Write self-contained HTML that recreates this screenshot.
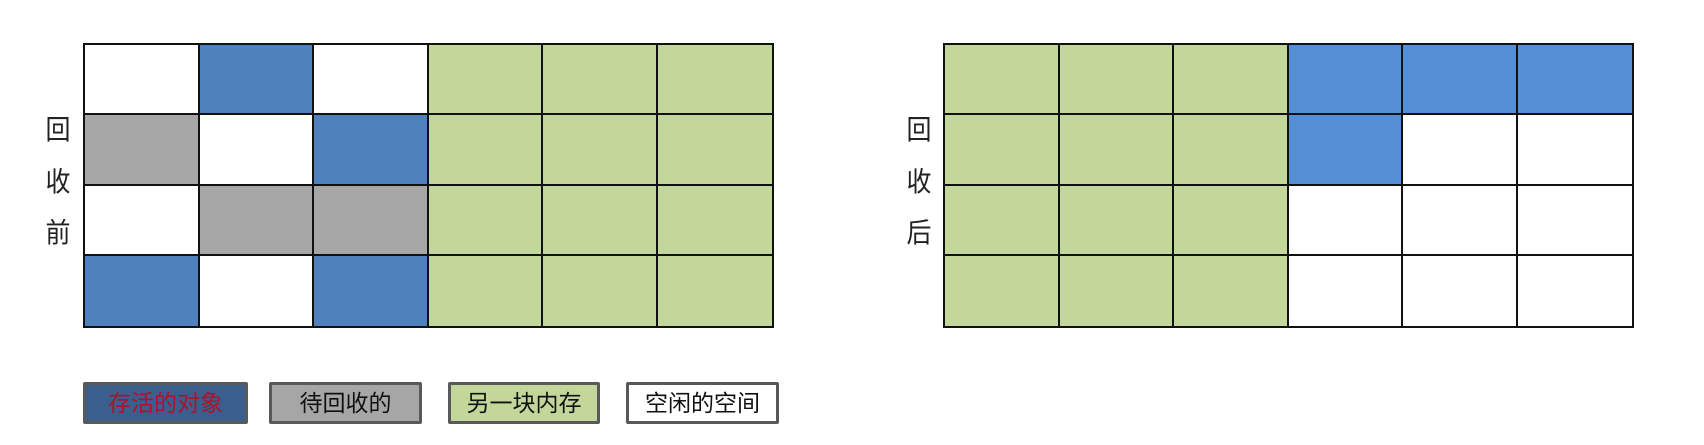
<!DOCTYPE html>
<html><head><meta charset="utf-8"><style>
body{margin:0;width:1704px;height:445px;background:#fff;position:relative;overflow:hidden;font-family:"Liberation Sans","Noto Sans CJK SC",sans-serif}
.g{position:absolute;top:43px;width:691px;height:285px;display:grid;grid-template-columns:repeat(6,1fr);grid-template-rows:repeat(4,1fr);border:2px solid #111;box-sizing:border-box}
.g div{border-right:2px solid #111;border-bottom:2px solid #111}
.g div:nth-child(6n){border-right:none}
.g div:nth-child(n+19){border-bottom:none}
.w{background:#fff}.b{background:#4f81bd}.y{background:#a6a6a6}.n{background:#c4d79b}.c{background:#558ed5}
.lab{position:absolute;font-size:25px;color:#222;width:30px;text-align:center;line-height:25px;transform:scaleY(1.1)}
.lg{position:absolute;top:382px;height:42px;box-sizing:border-box;border:3px solid #595959;font-size:23px;text-align:center;line-height:36px;color:#111;border-radius:2px}
</style></head><body>
<div class="g" style="left:83px">
<div class="w"></div><div class="b"></div><div class="w"></div><div class="n"></div><div class="n"></div><div class="n"></div>
<div class="y"></div><div class="w"></div><div class="b"></div><div class="n"></div><div class="n"></div><div class="n"></div>
<div class="w"></div><div class="y"></div><div class="y"></div><div class="n"></div><div class="n"></div><div class="n"></div>
<div class="b"></div><div class="w"></div><div class="b"></div><div class="n"></div><div class="n"></div><div class="n"></div>
</div>
<div class="g" style="left:943px">
<div class="n"></div><div class="n"></div><div class="n"></div><div class="c"></div><div class="c"></div><div class="c"></div>
<div class="n"></div><div class="n"></div><div class="n"></div><div class="c"></div><div class="w"></div><div class="w"></div>
<div class="n"></div><div class="n"></div><div class="n"></div><div class="w"></div><div class="w"></div><div class="w"></div>
<div class="n"></div><div class="n"></div><div class="n"></div><div class="w"></div><div class="w"></div><div class="w"></div>
</div>
<div class="lab" style="left:43px;top:118px">回</div>
<div class="lab" style="left:43px;top:170px">收</div>
<div class="lab" style="left:43px;top:221px">前</div>
<div class="lab" style="left:904px;top:118px">回</div>
<div class="lab" style="left:904px;top:170px">收</div>
<div class="lab" style="left:904px;top:221px">后</div>
<div class="lg" style="left:83px;width:165px;background:#3a5f8f;color:#b0112a">存活的对象</div>
<div class="lg" style="left:269px;width:153px;background:#a6a6a6">待回收的</div>
<div class="lg" style="left:448px;width:152px;background:#c4d79b">另一块内存</div>
<div class="lg" style="left:626px;width:153px;background:#fff">空闲的空间</div>
</body></html>
